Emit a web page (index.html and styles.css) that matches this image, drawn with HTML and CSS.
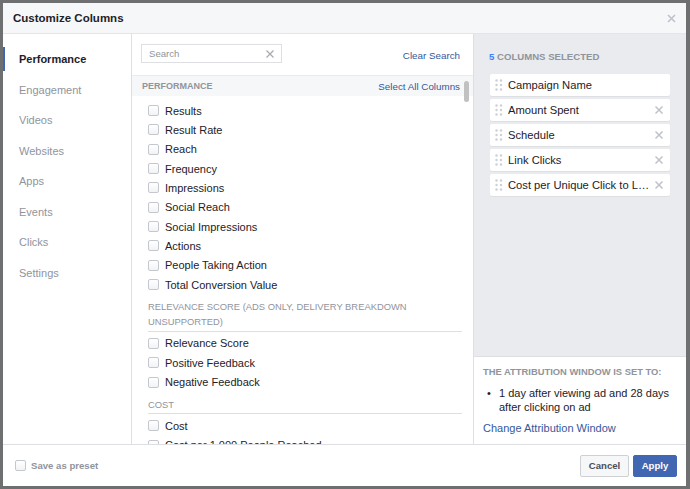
FILE: index.html
```html
<!DOCTYPE html>
<html>

<head>
    <meta charset="utf-8">
    <title>Customize Columns</title>
    <link rel="stylesheet" href="styles.css">
</head>

<body>
    <div class="dialog">
        <div class="dialog-head">
            <span class="dialog-title">Customize Columns</span>
            <svg class="close" width="9" height="9" viewBox="0 0 9 9"><path d="M1 1L8 8M8 1L1 8" stroke="#bec2c9" stroke-width="1.6"/></svg>
        </div>

        <div class="dialog-body">
            <ul class="nav">
                <li class="active">Performance</li>
                <li>Engagement</li>
                <li>Videos</li>
                <li>Websites</li>
                <li>Apps</li>
                <li>Events</li>
                <li>Clicks</li>
                <li>Settings</li>
            </ul>

            <div class="picker">
                <div class="search-row">
                    <div class="search">
                        <span>Search</span>
                        <svg width="8" height="8" viewBox="0 0 8 8"><path d="M0.5 0.5L7.5 7.5M7.5 0.5L0.5 7.5" stroke="#a7abb1" stroke-width="1.3"/></svg>
                    </div>
                    <a class="link">Clear Search</a>
                </div>
                <div class="band">
                    <span>PERFORMANCE</span>
                    <a class="link">Select All Columns</a>
                </div>
                <div class="list">
                    <label class="opt"><span class="box"></span>Results</label>
                    <label class="opt"><span class="box"></span>Result Rate</label>
                    <label class="opt"><span class="box"></span>Reach</label>
                    <label class="opt"><span class="box"></span>Frequency</label>
                    <label class="opt"><span class="box"></span>Impressions</label>
                    <label class="opt"><span class="box"></span>Social Reach</label>
                    <label class="opt"><span class="box"></span>Social Impressions</label>
                    <label class="opt"><span class="box"></span>Actions</label>
                    <label class="opt"><span class="box"></span>People Taking Action</label>
                    <label class="opt"><span class="box"></span>Total Conversion Value</label>
                    <div class="group">Relevance Score (Ads Only, Delivery Breakdown Unsupported)</div>
                    <label class="opt"><span class="box"></span>Relevance Score</label>
                    <label class="opt"><span class="box"></span>Positive Feedback</label>
                    <label class="opt"><span class="box"></span>Negative Feedback</label>
                    <div class="group">Cost</div>
                    <label class="opt"><span class="box"></span>Cost</label>
                    <label class="opt"><span class="box"></span>Cost per 1,000 People Reached</label>
                </div>
                <div class="thumb"></div>
            </div>

            <div class="side">
                <div class="selected">
                    <div class="count"><b>5</b> COLUMNS SELECTED</div>
                    <div class="col">
                        <svg class="grip" width="8" height="12" viewBox="0 0 8 12"><g fill="#ccd0d5"><circle cx="1.5" cy="1.5" r="1.2"/><circle cx="6" cy="1.5" r="1.2"/><circle cx="1.5" cy="6" r="1.2"/><circle cx="6" cy="6" r="1.2"/><circle cx="1.5" cy="10.5" r="1.2"/><circle cx="6" cy="10.5" r="1.2"/></g></svg>
                        <span class="name">Campaign Name</span>
                    </div>
                    <div class="col">
                        <svg class="grip" width="8" height="12" viewBox="0 0 8 12"><g fill="#ccd0d5"><circle cx="1.5" cy="1.5" r="1.2"/><circle cx="6" cy="1.5" r="1.2"/><circle cx="1.5" cy="6" r="1.2"/><circle cx="6" cy="6" r="1.2"/><circle cx="1.5" cy="10.5" r="1.2"/><circle cx="6" cy="10.5" r="1.2"/></g></svg>
                        <span class="name">Amount Spent</span>
                        <svg class="x" width="8" height="8" viewBox="0 0 8 8"><path d="M0.5 0.5L7.5 7.5M7.5 0.5L0.5 7.5" stroke="#bec2c9" stroke-width="1.5"/></svg>
                    </div>
                    <div class="col">
                        <svg class="grip" width="8" height="12" viewBox="0 0 8 12"><g fill="#ccd0d5"><circle cx="1.5" cy="1.5" r="1.2"/><circle cx="6" cy="1.5" r="1.2"/><circle cx="1.5" cy="6" r="1.2"/><circle cx="6" cy="6" r="1.2"/><circle cx="1.5" cy="10.5" r="1.2"/><circle cx="6" cy="10.5" r="1.2"/></g></svg>
                        <span class="name">Schedule</span>
                        <svg class="x" width="8" height="8" viewBox="0 0 8 8"><path d="M0.5 0.5L7.5 7.5M7.5 0.5L0.5 7.5" stroke="#bec2c9" stroke-width="1.5"/></svg>
                    </div>
                    <div class="col">
                        <svg class="grip" width="8" height="12" viewBox="0 0 8 12"><g fill="#ccd0d5"><circle cx="1.5" cy="1.5" r="1.2"/><circle cx="6" cy="1.5" r="1.2"/><circle cx="1.5" cy="6" r="1.2"/><circle cx="6" cy="6" r="1.2"/><circle cx="1.5" cy="10.5" r="1.2"/><circle cx="6" cy="10.5" r="1.2"/></g></svg>
                        <span class="name">Link Clicks</span>
                        <svg class="x" width="8" height="8" viewBox="0 0 8 8"><path d="M0.5 0.5L7.5 7.5M7.5 0.5L0.5 7.5" stroke="#bec2c9" stroke-width="1.5"/></svg>
                    </div>
                    <div class="col">
                        <svg class="grip" width="8" height="12" viewBox="0 0 8 12"><g fill="#ccd0d5"><circle cx="1.5" cy="1.5" r="1.2"/><circle cx="6" cy="1.5" r="1.2"/><circle cx="1.5" cy="6" r="1.2"/><circle cx="6" cy="6" r="1.2"/><circle cx="1.5" cy="10.5" r="1.2"/><circle cx="6" cy="10.5" r="1.2"/></g></svg>
                        <span class="name">Cost per Unique Click to Link</span>
                        <svg class="x" width="8" height="8" viewBox="0 0 8 8"><path d="M0.5 0.5L7.5 7.5M7.5 0.5L0.5 7.5" stroke="#bec2c9" stroke-width="1.5"/></svg>
                    </div>
                </div>
                <div class="attribution">
                    <div class="att-title">THE ATTRIBUTION WINDOW IS SET TO:</div>
                    <ul class="att-list">
                        <li>1 day after viewing ad and 28 days after clicking on ad</li>
                    </ul>
                    <a class="link att-link">Change Attribution Window</a>
                </div>
            </div>
        </div>

        <div class="dialog-foot">
            <label class="preset"><span class="box"></span>Save as preset</label>
            <div class="buttons">
                <button class="btn cancel">Cancel</button>
                <button class="btn apply">Apply</button>
            </div>
        </div>
    </div>
</body>

</html>
```

FILE: styles.css
```css
html,
body {
    margin: 0px;
    padding: 0px;
}

body {
    background: #6e6f71;
    font-family: "Liberation Sans", Helvetica, Arial, sans-serif;
    font-size: 11px;
    color: #1d2129;
    padding: 3px;
    width: 684px;
    height: 483px;
}

ul {
    margin: 0px;
    padding: 0px;
    list-style: none;
}

.dialog {
    width: 683px;
    height: 483px;
    background: white;
    display: flex;
    flex-direction: column;
    overflow: hidden;
}

/* header */
.dialog-head {
    height: 30px;
    flex: none;
    background: #f6f7f9;
    border-bottom: 1px solid #e5e5e5;
    display: flex;
    align-items: center;
    justify-content: space-between;
    padding: 0px 10px;
}

.dialog-title {
    font-size: 11.5px;
    font-weight: bold;
}

/* body: three columns */
.dialog-body {
    flex: 1;
    display: grid;
    grid-template-columns: 129px 342px 212px;
    min-height: 0;
}

.nav {
    border-right: 1px solid #dddfe2;
    padding-top: 13px;
}

.nav li {
    height: 24px;
    line-height: 24px;
    margin-bottom: 6.57px;
    padding-left: 16px;
    color: #90949c;
}

.nav li.active {
    color: #1d2129;
    font-weight: bold;
    box-shadow: inset 2px 0 0 #4267b2;
}

.picker {
    position: relative;
    border-right: 1px solid #dddfe2;
    display: flex;
    flex-direction: column;
    min-height: 0;
}

.link {
    color: #365899;
    font-size: 9.8px;
    font-weight: normal;
    cursor: pointer;
}

.search-row {
    height: 42px;
    flex: none;
    border-bottom: 1px solid #e9ebee;
    display: flex;
    align-items: flex-start;
    justify-content: space-between;
    padding: 10px 13px 0px 9px;
    box-sizing: border-box;
}

.search-row .link {
    margin-top: 6px;
}

.search {
    width: 141px;
    height: 19px;
    box-sizing: border-box;
    border: 1px solid #dddfe2;
    display: flex;
    align-items: center;
    justify-content: space-between;
    padding: 0px 7px 0px 7px;
    color: #90949c;
    font-size: 9.6px;
}

.band {
    height: 20px;
    flex: none;
    background: #f6f7f9;
    display: flex;
    align-items: center;
    justify-content: space-between;
    padding: 0px 13px 0px 10px;
    font-size: 9px;
    font-weight: bold;
    color: #90949c;
}

.list {
    flex: 1;
    overflow: hidden;
    padding: 5px 11px 0px 16px;
}

.opt {
    display: flex;
    align-items: center;
    height: 19.33px;
}

.box {
    display: inline-block;
    width: 11px;
    height: 11px;
    box-sizing: border-box;
    border: 1px solid #c4c8ce;
    border-radius: 2px;
    background: linear-gradient(#ffffff, #f2f3f5);
    margin-right: 6px;
    flex: none;
}

.group {
    margin-top: 5px;
    margin-bottom: 2px;
    padding-bottom: 1.5px;
    border-bottom: 1px solid #dddfe2;
    line-height: 15px;
    font-size: 9.4px;
    text-transform: uppercase;
    color: #90949c;
    padding-right: 40px;
}

.thumb {
    position: absolute;
    left: 332px;
    top: 47px;
    width: 5px;
    height: 21px;
    border-radius: 3px;
    background: #c1c1c1;
}

/* right side */
.side {
    display: flex;
    flex-direction: column;
    min-height: 0;
}

.selected {
    flex: 1;
    background: #e9ebee;
    padding: 17px 16px 0px 16px;
}

.count {
    font-size: 9.6px;
    font-weight: bold;
    color: #90949c;
    line-height: 12px;
    margin-bottom: 11px;
    margin-left: -1px;
}

.count b {
    color: #4080ff;
}

.col {
    height: 22px;
    background: white;
    border-radius: 2px;
    box-shadow: 0 1px 0 #dddfe2;
    margin-bottom: 3px;
    display: flex;
    align-items: center;
    padding: 0px 7px 0px 5px;
}

.grip {
    flex: none;
    margin-right: 5px;
}

.name {
    flex: 1;
    font-size: 11.2px;
    white-space: nowrap;
    overflow: hidden;
    text-overflow: ellipsis;
    padding-right: 4px;
}

.x {
    flex: none;
}

.attribution {
    height: 79px;
    flex: none;
    border-top: 1px solid #dddfe2;
    padding: 8px 9px 0px 9px;
}

.att-title {
    font-size: 9.4px;
    font-weight: bold;
    color: #90949c;
    line-height: 14px;
}

.att-list {
    margin-top: 7px;
    line-height: 14px;
}

.att-list li {
    position: relative;
    padding-left: 16px;
}

.att-list li:before {
    content: "\2022";
    position: absolute;
    left: 4px;
}

.att-link {
    display: block;
    margin-top: 7px;
    font-size: 11px;
    line-height: 14px;
}

/* footer */
.dialog-foot {
    height: 41px;
    flex: none;
    border-top: 1px solid #dddfe2;
    display: flex;
    align-items: center;
    justify-content: space-between;
    padding: 0px 9px 0px 12px;
}

.preset {
    display: flex;
    align-items: center;
    font-size: 9.6px;
    font-weight: bold;
    color: #90949c;
}

.preset .box {
    margin-right: 5px;
}

.buttons {
    display: flex;
    gap: 4px;
}

.btn {
    height: 22px;
    border-radius: 2px;
    font-family: inherit;
    font-size: 9.6px;
    font-weight: bold;
    padding: 0px;
}

.cancel {
    width: 49px;
    background: #f6f7f9;
    border: 1px solid #ced0d4;
    color: #4b4f56;
}

.apply {
    width: 44px;
    background: #4267b2;
    border: 1px solid #4267b2;
    color: white;
}
```
